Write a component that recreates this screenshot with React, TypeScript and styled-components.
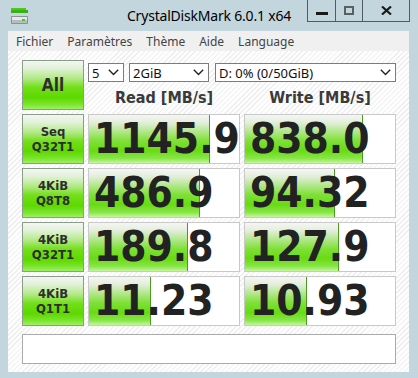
import { Fragment } from 'react';
import styled, { createGlobalStyle } from 'styled-components';

const GlobalStyle = createGlobalStyle`
  html, body {
    margin: 0;
    padding: 0;
  }
  body {
    background: #c4d6dd;
    font-family: "Noto Sans", "DejaVu Sans", sans-serif;
    overflow: hidden;
  }
`;

const Window = styled.div`
  width: 418px;
  height: 378px;
  background: #c4d6dd;
  display: flex;
  flex-direction: column;
`;

const TitleBar = styled.div`
  height: 31px;
  display: grid;
  grid-template-columns: 1fr auto 1fr;
  align-items: start;
`;

const AppIcon = styled.svg`
  margin: 7px 0 0 10px;
  display: block;
`;

const Title = styled.div`
  font-size: 14px;
  line-height: 16px;
  color: #000;
  padding-top: 8px;
  letter-spacing: -0.2px;
`;

const CaptionGroup = styled.div`
  justify-self: end;
  margin-right: 8px;
  display: flex;
  height: 22px;
  border: 1px solid #505c62;
  border-top: none;
  box-sizing: border-box;
`;

const CaptionButton = styled.div<{ $w: number }>`
  width: ${({ $w }) => $w}px;
  display: flex;
  align-items: center;
  justify-content: center;
  & + & {
    border-left: 1px solid #505c62;
  }
`;

const Client = styled.div`
  flex: 1;
  margin: 0 9px 6px 8px;
  display: flex;
  flex-direction: column;
  background: #fff;
`;

const MenuBar = styled.div`
  height: 20px;
  background: #f0f0f0;
  display: flex;
  align-items: center;
  padding-left: 1px;
`;

const MenuItem = styled.span`
  padding: 0 7px;
  font-size: 12px;
  color: #444;
`;

const Content = styled.div`
  flex: 1;
  padding: 9px 13px 8px 14px;
  background: repeating-linear-gradient(
    135deg,
    #fdfdfd 0px,
    #fdfdfd 2.6px,
    #efefef 2.6px,
    #efefef 3.6px
  );
`;

const Grid = styled.div`
  display: grid;
  grid-template-columns: 62px 152px 152px;
  grid-auto-rows: 50px;
  gap: 4px;
`;

const GreenButton = styled.div<{ $big?: boolean }>`
  box-sizing: border-box;
  border: 1px solid #8a9c8a;
  background: linear-gradient(
    180deg,
    #f3f5f3 0%,
    #e4f2dc 14%,
    #b2ea86 36%,
    #72df18 55%,
    #5ed900 76%,
    #78e42c 90%,
    #a0ee66 100%
  );
  display: flex;
  flex-direction: column;
  align-items: center;
  justify-content: center;
  font-family: "DejaVu Sans Condensed", "DejaVu Sans", sans-serif;
  font-weight: bold;
  color: #2e2e2e;
  font-size: ${({ $big }) => ($big ? '17px' : '13px')};
  line-height: ${({ $big }) => ($big ? '20px' : '15px')};
  text-align: center;
`;

const TopControls = styled.div`
  grid-column: 2 / 4;
  display: grid;
  grid-template-columns: 152px 152px;
  grid-template-rows: 19px 1fr;
  column-gap: 4px;
  padding-top: 3px;
`;

const SelectRow = styled.div`
  grid-column: 1 / 3;
  display: flex;
  gap: 5px;
`;

const Select = styled.div<{ $w: number; $gap?: number }>`
  width: ${({ $w }) => $w}px;
  margin-left: ${({ $gap }) => $gap ?? 0}px;
  box-sizing: border-box;
  height: 19px;
  border: 1px solid #7c7c7c;
  background: #fff;
  display: flex;
  align-items: center;
  justify-content: space-between;
  padding: 0 4px 0 3px;
  font-size: 13px;
  color: #111;
`;

const Header = styled.div`
  display: flex;
  align-items: center;
  justify-content: center;
  padding-top: 2px;
  font-family: "DejaVu Sans Condensed", "DejaVu Sans", sans-serif;
  font-weight: bold;
  font-size: 16px;
  color: #3a3a3a;
`;

const ValueBox = styled.div`
  position: relative;
  box-sizing: border-box;
  border: 1px solid #c9c9c9;
  background: #fff;
  overflow: hidden;
  display: flex;
  align-items: center;
`;

const Bar = styled.div`
  position: absolute;
  left: 0;
  top: 0;
  bottom: 0;
  box-sizing: border-box;
  border-right: 1px solid #4c9a22;
  background: linear-gradient(
    180deg,
    #f5f6f4 0%,
    #e2eeda 16%,
    #a8e67a 38%,
    #7ee036 54%,
    #68db12 74%,
    #86e646 90%,
    #c6f49e 100%
  );
`;

const Value = styled.span`
  position: relative;
  padding-left: 5px;
  font-family: "DejaVu Sans Condensed", "DejaVu Sans", sans-serif;
  font-weight: bold;
  font-size: 42px;
  line-height: 1;
  color: #222;
  white-space: nowrap;
`;

const Comment = styled.div`
  margin-top: 8px;
  height: 30px;
  box-sizing: border-box;
  border: 1px solid #aaaaaa;
  background: #fff;
`;

const Chevron = () => (
  <svg width="11" height="7" viewBox="0 0 11 7">
    <polyline points="0.8,0.8 5.5,5.6 10.2,0.8" fill="none" stroke="#222" strokeWidth="1.4" />
  </svg>
);

const rows = [
  { label: ['Seq', 'Q32T1'], read: '1145.9', readBar: 121, write: '838.0', writeBar: 118 },
  { label: ['4KiB', 'Q8T8'], read: '486.9', readBar: 111, write: '94.32', writeBar: 90 },
  { label: ['4KiB', 'Q32T1'], read: '189.8', readBar: 99, write: '127.9', writeBar: 94 },
  { label: ['4KiB', 'Q1T1'], read: '11.23', readBar: 62, write: '10.93', writeBar: 62 },
];

const menu = ['Fichier', 'Paramètres', 'Thème', 'Aide', 'Language'];

export default function App() {
  return (
    <Window>
      <GlobalStyle />
      <TitleBar>
        <AppIcon width="18" height="18" viewBox="0 0 18 18">
          <rect x="1" y="1" width="15" height="2" fill="#4cc81e" />
          <rect x="1" y="3" width="17" height="3" fill="#38b016" />
          <rect x="1" y="9" width="17" height="8" rx="1" fill="#8c9396" />
          <rect x="2" y="10" width="15" height="3" fill="#e4e8ea" />
          <rect x="2" y="13" width="15" height="3" fill="#b6bcc0" />
          <rect x="12" y="12" width="3" height="2" fill="#3ccc1a" />
        </AppIcon>
        <Title>CrystalDiskMark 6.0.1 x64</Title>
        <CaptionGroup>
          <CaptionButton $w={27}>
            <svg width="12" height="4" viewBox="0 0 12 4" style={{ marginTop: 6 }}>
              <rect x="0" y="0" width="12" height="3" fill="#1a1a1a" />
            </svg>
          </CaptionButton>
          <CaptionButton $w={26}>
            <svg width="10" height="9" viewBox="0 0 10 9">
              <rect x="1" y="1" width="8" height="7" fill="none" stroke="#5a5f62" strokeWidth="2" />
            </svg>
          </CaptionButton>
          <CaptionButton $w={46}>
            <svg width="11" height="9" viewBox="0 0 11 9">
              <path d="M1 0.5 L10 8.5 M10 0.5 L1 8.5" stroke="#1a1a1a" strokeWidth="2.2" />
            </svg>
          </CaptionButton>
        </CaptionGroup>
      </TitleBar>
      <Client>
        <MenuBar>
          {menu.map((m) => (
            <MenuItem key={m}>{m}</MenuItem>
          ))}
        </MenuBar>
        <Content>
          <Grid>
            <GreenButton $big>All</GreenButton>
            <TopControls>
              <SelectRow>
                <Select $w={36}>
                  <span>5</span>
                  <Chevron />
                </Select>
                <Select $w={80}>
                  <span>2GiB</span>
                  <Chevron />
                </Select>
                <Select $w={181} $gap={1}>
                  <span>D: 0% (0/50GiB)</span>
                  <Chevron />
                </Select>
              </SelectRow>
              <Header>Read [MB/s]</Header>
              <Header>Write [MB/s]</Header>
            </TopControls>
            {rows.map((r) => (
              <Fragment key={r.label.join('-')}>
                <GreenButton>
                  <span>{r.label[0]}</span>
                  <span>{r.label[1]}</span>
                </GreenButton>
                <ValueBox>
                  <Bar style={{ width: r.readBar }} />
                  <Value>{r.read}</Value>
                </ValueBox>
                <ValueBox>
                  <Bar style={{ width: r.writeBar }} />
                  <Value>{r.write}</Value>
                </ValueBox>
              </Fragment>
            ))}
          </Grid>
          <Comment />
        </Content>
      </Client>
    </Window>
  );
}
